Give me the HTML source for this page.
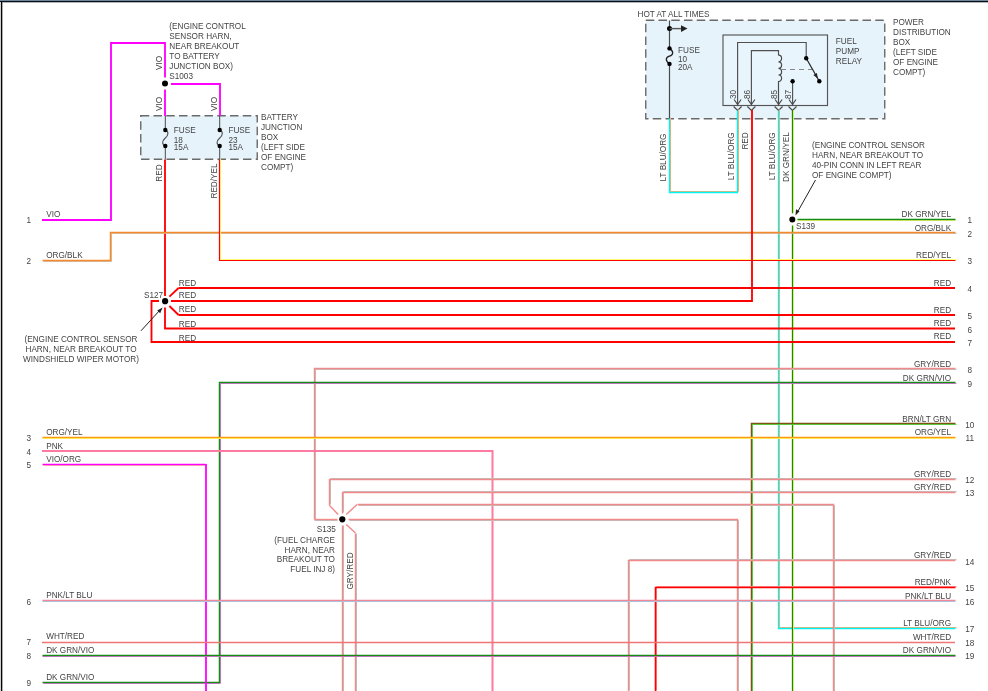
<!DOCTYPE html><html><head><meta charset="utf-8"><style>
html,body{margin:0;padding:0;background:#fff;width:988px;height:691px;overflow:hidden}
svg{display:block}
text{font-family:"Liberation Sans",sans-serif}
</style></head><body>
<div style="will-change:transform;width:988px;height:691px">
<svg width="988" height="691" viewBox="0 0 988 691">
<rect x="0" y="0" width="988" height="691" fill="#fff"/>
<rect x="140.75" y="115.75" width="116.5" height="43.5" fill="#e6f3fb" stroke="#6a6a6a" stroke-width="1.4" stroke-dasharray="8.5 4.25"/>
<rect x="645.75" y="20.25" width="239" height="98.5" fill="#e6f3fb" stroke="#6a6a6a" stroke-width="1.4" stroke-dasharray="8.5 4.25"/>
<rect x="723" y="35" width="104.5" height="70.5" fill="#e9f5fd" stroke="#555" stroke-width="1.15"/>
<path d="M42 220 H111 V43 H165 V77.5" fill="none" stroke="#ff00ff" stroke-width="1.85" />
<path d="M165 89.5 V116" fill="none" stroke="#ff00ff" stroke-width="1.85" />
<path d="M171 84 H220 V116" fill="none" stroke="#ff00ff" stroke-width="1.85" />
<circle cx="165" cy="83.5" r="3" fill="#000"/>
<text transform="translate(161.8,63) rotate(-90)" text-anchor="middle" font-size="8.2" fill="#444444">VIO</text>
<text transform="translate(161.8,104) rotate(-90)" text-anchor="middle" font-size="8.2" fill="#444444">VIO</text>
<text transform="translate(216.8,104) rotate(-90)" text-anchor="middle" font-size="8.2" fill="#444444">VIO</text>
<text x="169.3" y="28.7" text-anchor="start" font-size="8.2" fill="#444444">(ENGINE CONTROL</text>
<text x="169.3" y="38.7" text-anchor="start" font-size="8.2" fill="#444444">SENSOR HARN,</text>
<text x="169.3" y="48.7" text-anchor="start" font-size="8.2" fill="#444444">NEAR BREAKOUT</text>
<text x="169.3" y="58.7" text-anchor="start" font-size="8.2" fill="#444444">TO BATTERY</text>
<text x="169.3" y="68.7" text-anchor="start" font-size="8.2" fill="#444444">JUNCTION BOX)</text>
<text x="169.3" y="78.7" text-anchor="start" font-size="8.2" fill="#444444">S1003</text>
<path d="M165.3 116 V130" fill="none" stroke="#4a4a4a" stroke-width="1" />
<path d="M165.3 146 V159.5" fill="none" stroke="#4a4a4a" stroke-width="1" />
<path d="M165.3 130 C168.9 131.5 168.70000000000002 135 165.3 138 S161.70000000000002 144.5 165.3 146" fill="none" stroke="#505050" stroke-width="1.1" />
<circle cx="165.3" cy="130" r="2.2" fill="#000"/>
<circle cx="165.3" cy="146" r="2.2" fill="#000"/>
<path d="M219.7 116 V130" fill="none" stroke="#4a4a4a" stroke-width="1" />
<path d="M219.7 146 V159.5" fill="none" stroke="#4a4a4a" stroke-width="1" />
<path d="M219.7 130 C223.29999999999998 131.5 223.1 135 219.7 138 S216.1 144.5 219.7 146" fill="none" stroke="#505050" stroke-width="1.1" />
<circle cx="219.7" cy="130" r="2.2" fill="#000"/>
<circle cx="219.7" cy="146" r="2.2" fill="#000"/>
<text x="173.8" y="132.6" text-anchor="start" font-size="8.2" fill="#444444">FUSE</text>
<text x="173.8" y="142.6" text-anchor="start" font-size="8.2" fill="#444444">18</text>
<text x="173.8" y="149.6" text-anchor="start" font-size="8.2" fill="#444444">15A</text>
<text x="228.4" y="132.6" text-anchor="start" font-size="8.2" fill="#444444">FUSE</text>
<text x="228.4" y="142.6" text-anchor="start" font-size="8.2" fill="#444444">23</text>
<text x="228.4" y="149.6" text-anchor="start" font-size="8.2" fill="#444444">15A</text>
<text x="261" y="119.7" text-anchor="start" font-size="8.2" fill="#444444">BATTERY</text>
<text x="261" y="129.7" text-anchor="start" font-size="8.2" fill="#444444">JUNCTION</text>
<text x="261" y="139.7" text-anchor="start" font-size="8.2" fill="#444444">BOX</text>
<text x="261" y="149.7" text-anchor="start" font-size="8.2" fill="#444444">(LEFT SIDE</text>
<text x="261" y="159.7" text-anchor="start" font-size="8.2" fill="#444444">OF ENGINE</text>
<text x="261" y="169.7" text-anchor="start" font-size="8.2" fill="#444444">COMPT)</text>
<path d="M165 159.5 V296" fill="none" stroke="#ff0000" stroke-width="1.85" />
<text transform="translate(161.8,173) rotate(-90)" text-anchor="middle" font-size="8.2" fill="#444444">RED</text>
<text transform="translate(216.8,181) rotate(-90)" text-anchor="middle" font-size="8.2" fill="#444444">RED/YEL</text>
<rect x="0" y="0" width="988" height="1" fill="#6e859c"/>
<rect x="0" y="1" width="988" height="1.2" fill="#08111a"/>
<rect x="0" y="2.2" width="988" height="0.8" fill="#9a9a9a" opacity="0.6"/>
<rect x="0" y="2" width="1" height="689" fill="#cfcfcf"/>
<rect x="1" y="2" width="1.2" height="689" fill="#050505"/>
<rect x="2.2" y="3" width="0.8" height="688" fill="#8a8a8a" opacity="0.6"/>
<text x="637.5" y="16.6" text-anchor="start" font-size="8.2" fill="#444444">HOT AT ALL TIMES</text>
<path d="M669.5 20.5 V48.4" fill="none" stroke="#4a4a4a" stroke-width="1.2" />
<path d="M669.5 63.9 V118.5" fill="none" stroke="#4a4a4a" stroke-width="1.2" />
<path d="M669.5 48.4 C674 51.5 673.5 55 669.5 56.2 S665 60.5 669.5 63.9" fill="none" stroke="#222" stroke-width="1.3"/>
<circle cx="669.5" cy="48.4" r="2.2" fill="#000"/>
<circle cx="669.5" cy="63.9" r="2.2" fill="#000"/>
<circle cx="669.5" cy="28.6" r="2.5" fill="#000"/>
<path d="M669.5 28.6 H683" fill="none" stroke="#555" stroke-width="1.4" />
<path d="M687.5 28.6 L681 25.3 L681 31.9 Z" fill="#222"/>
<text x="678" y="52.9" text-anchor="start" font-size="8.2" fill="#444444">FUSE</text>
<text x="678" y="61.8" text-anchor="start" font-size="8.2" fill="#444444">10</text>
<text x="678" y="69.6" text-anchor="start" font-size="8.2" fill="#444444">20A</text>
<text x="835.8" y="43.7" text-anchor="start" font-size="8.2" fill="#444444">FUEL</text>
<text x="835.8" y="53.7" text-anchor="start" font-size="8.2" fill="#444444">PUMP</text>
<text x="835.8" y="63.7" text-anchor="start" font-size="8.2" fill="#444444">RELAY</text>
<text x="893" y="24.7" text-anchor="start" font-size="8.2" fill="#444444">POWER</text>
<text x="893" y="34.7" text-anchor="start" font-size="8.2" fill="#444444">DISTRIBUTION</text>
<text x="893" y="44.7" text-anchor="start" font-size="8.2" fill="#444444">BOX</text>
<text x="893" y="54.7" text-anchor="start" font-size="8.2" fill="#444444">(LEFT SIDE</text>
<text x="893" y="64.7" text-anchor="start" font-size="8.2" fill="#444444">OF ENGINE</text>
<text x="893" y="74.7" text-anchor="start" font-size="8.2" fill="#444444">COMPT)</text>
<path d="M737.6 105 V42.5 H806.2 V58.2" fill="none" stroke="#505050" stroke-width="1.15" />
<path d="M751.4 105 V50.6 H778.5 V55.2" fill="none" stroke="#505050" stroke-width="1.15" />
<path d="M778.5 55.2 a3.1 3.3 0 0 1 0 6.6 a3.1 3.3 0 0 1 0 6.6 a3.1 3.3 0 0 1 0 6.6 a3.1 3.3 0 0 1 0 6.6 V105" fill="none" stroke="#4a4a4a" stroke-width="1.2"/>
<path d="M781 69.5 H812" fill="none" stroke="#888" stroke-width="1" stroke-dasharray="5 4"/>
<path d="M806.2 58.2 L819.3 81.2" fill="none" stroke="#222" stroke-width="1.2" />
<path d="M817.8 78.6 L816.9 72.9 L813.3 75.0 Z" fill="#222"/>
<circle cx="806.2" cy="58.2" r="2.2" fill="#000"/>
<circle cx="819.3" cy="81.2" r="2.2" fill="#000"/>
<path d="M792.6 81.2 V105" fill="none" stroke="#505050" stroke-width="1.15" />
<circle cx="792.6" cy="81.2" r="2.2" fill="#000"/>
<path d="M734.1 99.5 L737.6 104.5 L741.1 99.5" fill="none" stroke="#4a4a4a" stroke-width="1.2" />
<path d="M733.6 106.5 L737.6 110.5 L741.6 106.5" fill="none" stroke="#4a4a4a" stroke-width="1.2" />
<text transform="translate(735.8000000000001,94.5) rotate(-90)" text-anchor="middle" font-size="8.2" fill="#444444">30</text>
<path d="M747.9 99.5 L751.4 104.5 L754.9 99.5" fill="none" stroke="#4a4a4a" stroke-width="1.2" />
<path d="M747.4 106.5 L751.4 110.5 L755.4 106.5" fill="none" stroke="#4a4a4a" stroke-width="1.2" />
<text transform="translate(749.6,94.5) rotate(-90)" text-anchor="middle" font-size="8.2" fill="#444444">86</text>
<path d="M775.1 99.5 L778.6 104.5 L782.1 99.5" fill="none" stroke="#4a4a4a" stroke-width="1.2" />
<path d="M774.6 106.5 L778.6 110.5 L782.6 106.5" fill="none" stroke="#4a4a4a" stroke-width="1.2" />
<text transform="translate(776.8000000000001,94.5) rotate(-90)" text-anchor="middle" font-size="8.2" fill="#444444">85</text>
<path d="M789.0 99.5 L792.5 104.5 L796.0 99.5" fill="none" stroke="#4a4a4a" stroke-width="1.2" />
<path d="M788.5 106.5 L792.5 110.5 L796.5 106.5" fill="none" stroke="#4a4a4a" stroke-width="1.2" />
<text transform="translate(790.7,94.5) rotate(-90)" text-anchor="middle" font-size="8.2" fill="#444444">87</text>
<path d="M670.5 117.5 L670.5 191.5 L738.5 191.5 L738.5 109.5" fill="none" stroke="#ffaa66" stroke-width="1" opacity="1"/>
<path d="M669.5 118.5 L669.5 192.5 L737.5 192.5 L737.5 110.5" fill="none" stroke="#00f4f4" stroke-width="1.3"/>
<text transform="translate(666.3,133.5) rotate(-90)" text-anchor="end" font-size="8.2" fill="#444444">LT BLU/ORG</text>
<text transform="translate(734.3,132.3) rotate(-90)" text-anchor="end" font-size="8.2" fill="#444444">LT BLU/ORG</text>
<text transform="translate(748.3,132.3) rotate(-90)" text-anchor="end" font-size="8.2" fill="#444444">RED</text>
<text transform="translate(775.3,132.3) rotate(-90)" text-anchor="end" font-size="8.2" fill="#444444">LT BLU/ORG</text>
<text transform="translate(789.3,132.3) rotate(-90)" text-anchor="end" font-size="8.2" fill="#444444">DK GRN/YEL</text>
<path d="M779.5 109.5 L779.5 627.5 L956.5 627.5" fill="none" stroke="#ffaa66" stroke-width="1" opacity="1"/>
<path d="M778.5 110.5 L778.5 628.5 L955.5 628.5" fill="none" stroke="#00f4f4" stroke-width="1.3"/>
<path d="M793.5 110.5 L793.5 691.5" fill="none" stroke="#ffff70" stroke-width="1" opacity="1"/>
<path d="M792.5 110.5 L792.5 691.5" fill="none" stroke="#158a15" stroke-width="1.3"/>
<path d="M797.5 220.5 L955.5 220.5" fill="none" stroke="#ffff70" stroke-width="1" opacity="1"/>
<path d="M797.5 219.5 L955.5 219.5" fill="none" stroke="#158a15" stroke-width="1.3"/>
<rect x="790" y="213.3" width="5" height="12.2" fill="#fff"/>
<circle cx="792.3" cy="219.6" r="3" fill="#000"/>
<text x="796" y="229" text-anchor="start" font-size="8.2" fill="#444444">S139</text>
<text x="812" y="148.3" text-anchor="start" font-size="8.2" fill="#444444">(ENGINE CONTROL SENSOR</text>
<text x="812" y="158.3" text-anchor="start" font-size="8.2" fill="#444444">HARN, NEAR BREAKOUT TO</text>
<text x="812" y="168.3" text-anchor="start" font-size="8.2" fill="#444444">40-PIN CONN IN LEFT REAR</text>
<text x="812" y="178.3" text-anchor="start" font-size="8.2" fill="#444444">OF ENGINE COMPT)</text>
<path d="M815.5 180 L797.5 212" fill="none" stroke="#222" stroke-width="1" />
<path d="M795.5 215.5 L796 209.3 L799.5 211.3 Z" fill="#222"/>
<path d="M43.5 261.5 L111.5 261.5 L111.5 233.5 L956.5 233.5" fill="none" stroke="#c8b0a0" stroke-width="1" opacity="0.8"/>
<path d="M42.5 260.5 L110.5 260.5 L110.5 232.5 L955.5 232.5" fill="none" stroke="#f58a2a" stroke-width="1.5"/>
<path d="M220.5 158.5 L220.5 259.5 L956.5 259.5" fill="none" stroke="#ffff70" stroke-width="1" opacity="1"/>
<path d="M219.5 159.5 L219.5 260.5 L955.5 260.5" fill="none" stroke="#ff0000" stroke-width="1.2"/>
<path d="M178.6 288 H955" fill="none" stroke="#ff0000" stroke-width="1.85" />
<path d="M169.4 296.6 L178.6 288" fill="none" stroke="#ff0000" stroke-width="1.85" />
<path d="M171 301 H752 V110" fill="none" stroke="#ff0000" stroke-width="1.85" />
<path d="M178.6 315 H955" fill="none" stroke="#ff0000" stroke-width="1.85" />
<path d="M169.4 306 L178.6 315" fill="none" stroke="#ff0000" stroke-width="1.85" />
<path d="M165 307.5 V328.5 H955" fill="none" stroke="#ff0000" stroke-width="1.85" />
<path d="M159 301 H151.5 V342 H955" fill="none" stroke="#ff0000" stroke-width="1.85" />
<circle cx="165.1" cy="301.2" r="3.1" fill="#000"/>
<text x="144" y="297.9" text-anchor="start" font-size="8.2" fill="#444444">S127</text>
<text x="178.8" y="285.6" text-anchor="start" font-size="8.2" fill="#444444">RED</text>
<text x="178.8" y="298.4" text-anchor="start" font-size="8.2" fill="#444444">RED</text>
<text x="178.8" y="312.2" text-anchor="start" font-size="8.2" fill="#444444">RED</text>
<text x="178.8" y="326.5" text-anchor="start" font-size="8.2" fill="#444444">RED</text>
<text x="178.8" y="341.0" text-anchor="start" font-size="8.2" fill="#444444">RED</text>
<path d="M141 330.8 L160 310" fill="none" stroke="#222" stroke-width="1" />
<path d="M162.6 307.4 L157.2 310.6 L160.2 313.3 Z" fill="#222"/>
<text x="81" y="342.2" text-anchor="middle" font-size="8.2" fill="#444444">(ENGINE CONTROL SENSOR</text>
<text x="81" y="352.2" text-anchor="middle" font-size="8.2" fill="#444444">HARN, NEAR BREAKOUT TO</text>
<text x="81" y="362.2" text-anchor="middle" font-size="8.2" fill="#444444">WINDSHIELD WIPER MOTOR)</text>
<path d="M315.5 520.5 L315.5 369.5 L956.5 369.5" fill="none" stroke="#c0c0c0" stroke-width="1" opacity="1"/>
<path d="M314.5 519.5 L314.5 368.5 L955.5 368.5" fill="none" stroke="#f28a8a" stroke-width="1.4"/>
<path d="M43.5 683.5 L220.5 683.5 L220.5 383.5 L956.5 383.5" fill="none" stroke="#f070f0" stroke-width="1" opacity="1"/>
<path d="M42.5 682.5 L219.5 682.5 L219.5 382.5 L955.5 382.5" fill="none" stroke="#158a15" stroke-width="1.5"/>
<path d="M752.5 692.5 L752.5 424.5 L956.5 424.5" fill="none" stroke="#50f050" stroke-width="1" opacity="1"/>
<path d="M751.5 691.5 L751.5 423.5 L955.5 423.5" fill="none" stroke="#7a5410" stroke-width="1.5"/>
<path d="M42.5 438.5 L955.5 438.5" fill="none" stroke="#ffff70" stroke-width="1" opacity="1"/>
<path d="M42.5 437.5 L955.5 437.5" fill="none" stroke="#ff9a10" stroke-width="1.6"/>
<path d="M42 451 H492.5 V691" fill="none" stroke="#ff7aa0" stroke-width="2" />
<path d="M43.5 465.5 L206.5 465.5" fill="none" stroke="#ffaa66" stroke-width="1" opacity="0.6"/>
<path d="M42.5 464.5 L205.5 464.5" fill="none" stroke="#ff00ff" stroke-width="1.7"/>
<path d="M206 464 V691" fill="none" stroke="#ff00ff" stroke-width="1.8" />
<path d="M314.5 520.5 L337.5 520.5" fill="none" stroke="#c0c0c0" stroke-width="1" opacity="1"/>
<path d="M314.5 519.5 L337.5 519.5" fill="none" stroke="#f28a8a" stroke-width="1.4"/>
<path d="M330.5 504.5 L330.5 478.5 L956.5 478.5" fill="none" stroke="#c0c0c0" stroke-width="1" opacity="1"/>
<path d="M329.5 505.5 L329.5 479.5 L955.5 479.5" fill="none" stroke="#f28a8a" stroke-width="1.4"/>
<path d="M329.5 505.5 L338.2 514.4" fill="none" stroke="#f28a8a" stroke-width="1.4" />
<path d="M343.5 512.5 L343.5 491.5 L956.5 491.5" fill="none" stroke="#c0c0c0" stroke-width="1" opacity="1"/>
<path d="M342.5 513.5 L342.5 492.5 L955.5 492.5" fill="none" stroke="#f28a8a" stroke-width="1.4"/>
<path d="M358.5 505.5 L834.5 505.5 L834.5 692.5" fill="none" stroke="#c0c0c0" stroke-width="1" opacity="1"/>
<path d="M357.5 504.5 L833.5 504.5 L833.5 691.5" fill="none" stroke="#f28a8a" stroke-width="1.4"/>
<path d="M346.3 514.4 L357 504.5" fill="none" stroke="#f28a8a" stroke-width="1.4" />
<path d="M349.5 520.5 L738.5 520.5 L738.5 692.5" fill="none" stroke="#c0c0c0" stroke-width="1" opacity="1"/>
<path d="M348.5 519.5 L737.5 519.5 L737.5 691.5" fill="none" stroke="#f28a8a" stroke-width="1.4"/>
<path d="M343.5 525.5 L343.5 691.5" fill="none" stroke="#c0c0c0" stroke-width="1" opacity="1"/>
<path d="M342.5 525.5 L342.5 691.5" fill="none" stroke="#f28a8a" stroke-width="1.4"/>
<path d="M346.3 524.5 L355.5 533" fill="none" stroke="#f28a8a" stroke-width="1.4" />
<path d="M356.5 533.5 L356.5 691.5" fill="none" stroke="#c0c0c0" stroke-width="1" opacity="1"/>
<path d="M355.5 533.5 L355.5 691.5" fill="none" stroke="#f28a8a" stroke-width="1.4"/>
<circle cx="342.3" cy="519.3" r="3.1" fill="#000"/>
<text x="335.9" y="532.4" text-anchor="end" font-size="8.2" fill="#444444">S135</text>
<text x="335" y="543.0" text-anchor="end" font-size="8.2" fill="#444444">(FUEL CHARGE</text>
<text x="335" y="552.7" text-anchor="end" font-size="8.2" fill="#444444">HARN, NEAR</text>
<text x="335" y="562.4" text-anchor="end" font-size="8.2" fill="#444444">BREAKOUT TO</text>
<text x="335" y="572.1" text-anchor="end" font-size="8.2" fill="#444444">FUEL INJ 8)</text>
<text transform="translate(353,571) rotate(-90)" text-anchor="middle" font-size="8.2" fill="#444444">GRY/RED</text>
<path d="M629.5 690.5 L629.5 559.5 L956.5 559.5" fill="none" stroke="#c0c0c0" stroke-width="1" opacity="1"/>
<path d="M628.5 691.5 L628.5 560.5 L955.5 560.5" fill="none" stroke="#f28a8a" stroke-width="1.4"/>
<path d="M656.5 690.5 L656.5 586.5 L956.5 586.5" fill="none" stroke="#ff9090" stroke-width="1" opacity="1"/>
<path d="M655.5 691.5 L655.5 587.5 L955.5 587.5" fill="none" stroke="#ff0000" stroke-width="1.6"/>
<path d="M42.5 601.5 L955.5 601.5" fill="none" stroke="#98d4f0" stroke-width="1" opacity="1"/>
<path d="M42.5 600.5 L955.5 600.5" fill="none" stroke="#f08898" stroke-width="1.3"/>
<path d="M42 642.5 H955" fill="none" stroke="#f07676" stroke-width="1.5" />
<path d="M42.5 656.5 L955.5 656.5" fill="none" stroke="#f070f0" stroke-width="1" opacity="1"/>
<path d="M42.5 655.5 L955.5 655.5" fill="none" stroke="#158a15" stroke-width="1.5"/>
<text x="46.2" y="217" text-anchor="start" font-size="8.2" fill="#444444">VIO</text>
<text x="28.7" y="223" text-anchor="middle" font-size="8.2" fill="#444444">1</text>
<text x="46.2" y="257.5" text-anchor="start" font-size="8.2" fill="#444444">ORG/BLK</text>
<text x="28.7" y="263.5" text-anchor="middle" font-size="8.2" fill="#444444">2</text>
<text x="46.2" y="435" text-anchor="start" font-size="8.2" fill="#444444">ORG/YEL</text>
<text x="28.7" y="441" text-anchor="middle" font-size="8.2" fill="#444444">3</text>
<text x="46.2" y="449" text-anchor="start" font-size="8.2" fill="#444444">PNK</text>
<text x="28.7" y="455" text-anchor="middle" font-size="8.2" fill="#444444">4</text>
<text x="46.2" y="461.7" text-anchor="start" font-size="8.2" fill="#444444">VIO/ORG</text>
<text x="28.7" y="468" text-anchor="middle" font-size="8.2" fill="#444444">5</text>
<text x="46.2" y="598" text-anchor="start" font-size="8.2" fill="#444444">PNK/LT BLU</text>
<text x="28.7" y="604.5" text-anchor="middle" font-size="8.2" fill="#444444">6</text>
<text x="46.2" y="639.3" text-anchor="start" font-size="8.2" fill="#444444">WHT/RED</text>
<text x="28.7" y="644.7" text-anchor="middle" font-size="8.2" fill="#444444">7</text>
<text x="46.2" y="653.2" text-anchor="start" font-size="8.2" fill="#444444">DK GRN/VIO</text>
<text x="28.7" y="658.5" text-anchor="middle" font-size="8.2" fill="#444444">8</text>
<text x="46.2" y="679.5" text-anchor="start" font-size="8.2" fill="#444444">DK GRN/VIO</text>
<text x="28.7" y="686" text-anchor="middle" font-size="8.2" fill="#444444">9</text>
<text x="951.1" y="216.8" text-anchor="end" font-size="8.2" fill="#444444">DK GRN/YEL</text>
<text x="969.7" y="222.9" text-anchor="middle" font-size="8.2" fill="#444444">1</text>
<text x="951.1" y="231.0" text-anchor="end" font-size="8.2" fill="#444444">ORG/BLK</text>
<text x="969.7" y="237.2" text-anchor="middle" font-size="8.2" fill="#444444">2</text>
<text x="951.1" y="258.2" text-anchor="end" font-size="8.2" fill="#444444">RED/YEL</text>
<text x="969.7" y="264.2" text-anchor="middle" font-size="8.2" fill="#444444">3</text>
<text x="951.1" y="286.0" text-anchor="end" font-size="8.2" fill="#444444">RED</text>
<text x="969.7" y="292.2" text-anchor="middle" font-size="8.2" fill="#444444">4</text>
<text x="951.1" y="313.0" text-anchor="end" font-size="8.2" fill="#444444">RED</text>
<text x="969.7" y="319.2" text-anchor="middle" font-size="8.2" fill="#444444">5</text>
<text x="951.1" y="325.8" text-anchor="end" font-size="8.2" fill="#444444">RED</text>
<text x="969.7" y="332.7" text-anchor="middle" font-size="8.2" fill="#444444">6</text>
<text x="951.1" y="339.3" text-anchor="end" font-size="8.2" fill="#444444">RED</text>
<text x="969.7" y="346.2" text-anchor="middle" font-size="8.2" fill="#444444">7</text>
<text x="951.1" y="366.6" text-anchor="end" font-size="8.2" fill="#444444">GRY/RED</text>
<text x="969.7" y="372.8" text-anchor="middle" font-size="8.2" fill="#444444">8</text>
<text x="951.1" y="381.0" text-anchor="end" font-size="8.2" fill="#444444">DK GRN/VIO</text>
<text x="969.7" y="387.2" text-anchor="middle" font-size="8.2" fill="#444444">9</text>
<text x="951.1" y="421.8" text-anchor="end" font-size="8.2" fill="#444444">BRN/LT GRN</text>
<text x="969.7" y="428.0" text-anchor="middle" font-size="8.2" fill="#444444">10</text>
<text x="951.1" y="435.1" text-anchor="end" font-size="8.2" fill="#444444">ORG/YEL</text>
<text x="969.7" y="441.3" text-anchor="middle" font-size="8.2" fill="#444444">11</text>
<text x="951.1" y="476.5" text-anchor="end" font-size="8.2" fill="#444444">GRY/RED</text>
<text x="969.7" y="482.7" text-anchor="middle" font-size="8.2" fill="#444444">12</text>
<text x="951.1" y="490.1" text-anchor="end" font-size="8.2" fill="#444444">GRY/RED</text>
<text x="969.7" y="496.3" text-anchor="middle" font-size="8.2" fill="#444444">13</text>
<text x="951.1" y="558.3" text-anchor="end" font-size="8.2" fill="#444444">GRY/RED</text>
<text x="969.7" y="564.5" text-anchor="middle" font-size="8.2" fill="#444444">14</text>
<text x="951.1" y="585.0" text-anchor="end" font-size="8.2" fill="#444444">RED/PNK</text>
<text x="969.7" y="591.2" text-anchor="middle" font-size="8.2" fill="#444444">15</text>
<text x="951.1" y="598.9" text-anchor="end" font-size="8.2" fill="#444444">PNK/LT BLU</text>
<text x="969.7" y="605.1" text-anchor="middle" font-size="8.2" fill="#444444">16</text>
<text x="951.1" y="625.8" text-anchor="end" font-size="8.2" fill="#444444">LT BLU/ORG</text>
<text x="969.7" y="632.0" text-anchor="middle" font-size="8.2" fill="#444444">17</text>
<text x="951.1" y="640.2" text-anchor="end" font-size="8.2" fill="#444444">WHT/RED</text>
<text x="969.7" y="646.4" text-anchor="middle" font-size="8.2" fill="#444444">18</text>
<text x="951.1" y="653.2" text-anchor="end" font-size="8.2" fill="#444444">DK GRN/VIO</text>
<text x="969.7" y="659.4" text-anchor="middle" font-size="8.2" fill="#444444">19</text>
</svg></div></body></html>
